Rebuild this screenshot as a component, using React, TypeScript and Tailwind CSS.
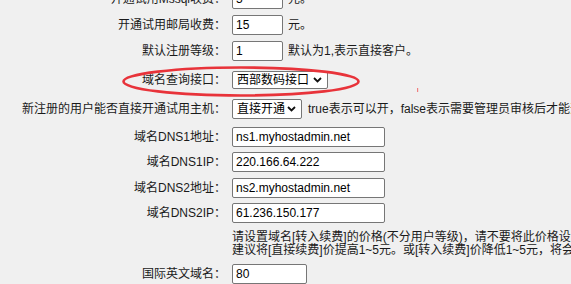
import React from "react";

const inputCls =
  "h-[20px] border border-[#767676] rounded-[2px] bg-white pl-[3px] pr-[2px] text-[12px] text-black outline-none";

function Label({ children }: { children?: React.ReactNode }) {
  return <div className="w-[226px] shrink-0 text-right whitespace-nowrap">{children}</div>;
}

function Select({ text, w, h }: { text: string; w: string; h: string }) {
  return (
    <div
      className={`${w} ${h} shrink-0 flex items-center justify-between border border-[#767676] rounded-[2px] bg-white pl-[4px] pr-[5px] text-black`}
    >
      <span className="whitespace-nowrap">{text}</span>
      <svg width="9" height="6" viewBox="0 0 9 6" className="shrink-0">
        <path d="M1 1 L4.5 4.5 L8 1" fill="none" stroke="#111" strokeWidth="1.8" />
      </svg>
    </div>
  );
}

export default function App() {
  return (
    <div className="relative w-[571px] h-[284px] overflow-hidden bg-[#f0f0f0] text-[12px] text-[#1a1a1a] font-['Liberation_Sans','Noto_Sans_CJK_SC',sans-serif]">
      <div className="flex flex-col mt-[-14px]">
        <div className="h-[26px] flex items-center">
          <Label>开通试用Mssql收费：</Label>
          <input readOnly defaultValue="5" className={`${inputCls} ml-[6px] w-[51px]`} />
          <span className="ml-[5px]">元。</span>
        </div>
        <div className="h-[25px] flex items-center">
          <Label>开通试用邮局收费：</Label>
          <input readOnly defaultValue="15" className={`${inputCls} ml-[6px] w-[51px]`} />
          <span className="ml-[5px]">元。</span>
        </div>
        <div className="h-[28px] flex items-center">
          <Label>默认注册等级：</Label>
          <input readOnly defaultValue="1" className={`${inputCls} ml-[6px] w-[51px]`} />
          <span className="ml-[5px] whitespace-nowrap">默认为1,表示直接客户。</span>
        </div>
        <div className="h-[30px] flex items-center">
          <Label>域名查询接口：</Label>
          <div className="ml-[6px]">
            <Select text="西部数码接口" w="w-[96px]" h="h-[18px]" />
          </div>
        </div>
        <div className="h-[28px] flex items-center">
          <Label>新注册的用户能否直接开通试用主机：</Label>
          <div className="ml-[6px]">
            <Select text="直接开通" w="w-[70px]" h="h-[20px]" />
          </div>
          <span className="ml-[6px] whitespace-nowrap">
            true表示可以开，false表示需要管理员审核后才能开通
          </span>
        </div>
        <div className="h-[28px] flex items-center">
          <Label>域名DNS1地址：</Label>
          <input readOnly defaultValue="ns1.myhostadmin.net" className={`${inputCls} ml-[6px] w-[153px]`} />
        </div>
        <div className="h-[21px] flex items-center">
          <Label>域名DNS1IP：</Label>
          <input readOnly defaultValue="220.166.64.222" className={`${inputCls} ml-[6px] w-[153px]`} />
        </div>
        <div className="h-[31px] flex items-center">
          <Label>域名DNS2地址：</Label>
          <input readOnly defaultValue="ns2.myhostadmin.net" className={`${inputCls} ml-[6px] w-[153px]`} />
        </div>
        <div className="h-[20px] flex items-center">
          <Label>域名DNS2IP：</Label>
          <input readOnly defaultValue="61.236.150.177" className={`${inputCls} ml-[6px] w-[153px]`} />
        </div>
        <div className="h-[41px] flex items-start">
          <Label />
          <div className="ml-[6px] pt-[8px] leading-[13px] whitespace-nowrap">
            <div>请设置域名[转入续费]的价格(不分用户等级)，请不要将此价格设置得过低，</div>
            <div>建议将[直接续费]价提高1~5元。或[转入续费]价降低1~5元，将会有更多客户</div>
          </div>
        </div>
        <div className="h-[20px] flex items-center">
          <Label>国际英文域名：</Label>
          <input readOnly defaultValue="80" className={`${inputCls} ml-[6px] w-[75px]`} />
        </div>
      </div>
      <svg className="absolute left-0 top-0 pointer-events-none" width="571" height="284">
        <ellipse cx="241" cy="81.5" rx="117.5" ry="14" fill="none" stroke="#e8333a" strokeWidth="2.6" />
        <rect x="417" y="88" width="1.2" height="4" fill="#f08080" />
      </svg>
    </div>
  );
}
